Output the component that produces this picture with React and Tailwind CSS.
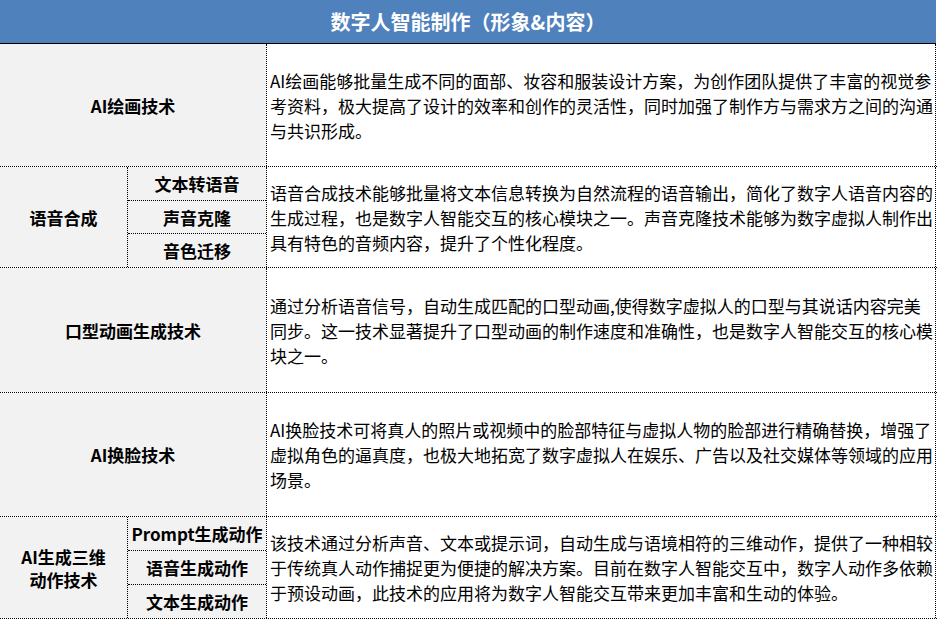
import React from "react";

const font = { fontFamily: '"Noto Sans CJK SC", "Noto Sans", sans-serif' };

const rows = [
  {
    label: ["AI绘画技术"],
    h: "h-[123px]",
    lines: [
      "AI绘画能够批量生成不同的面部、妆容和服装设计方案，为创作团队提供了丰富的视觉参",
      "考资料，极大提高了设计的效率和创作的灵活性，同时加强了制作方与需求方之间的沟通",
      "与共识形成。",
    ],
  },
  {
    label: ["语音合成"],
    subs: ["文本转语音", "声音克隆", "音色迁移"],
    h: "h-[101px]",
    lines: [
      "语音合成技术能够批量将文本信息转换为自然流程的语音输出，简化了数字人语音内容的",
      "生成过程，也是数字人智能交互的核心模块之一。声音克隆技术能够为数字虚拟人制作出",
      "具有特色的音频内容，提升了个性化程度。",
    ],
  },
  {
    label: ["口型动画生成技术"],
    h: "h-[125px]",
    lines: [
      "通过分析语音信号，自动生成匹配的口型动画,使得数字虚拟人的口型与其说话内容完美",
      "同步。这一技术显著提升了口型动画的制作速度和准确性，也是数字人智能交互的核心模",
      "块之一。",
    ],
  },
  {
    label: ["AI换脸技术"],
    h: "h-[124px]",
    lines: [
      "AI换脸技术可将真人的照片或视频中的脸部特征与虚拟人物的脸部进行精确替换，增强了",
      "虚拟角色的逼真度，也极大地拓宽了数字虚拟人在娱乐、广告以及社交媒体等领域的应用",
      "场景。",
    ],
  },
  {
    label: ["AI生成三维", "动作技术"],
    subs: ["Prompt生成动作", "语音生成动作", "文本生成动作"],
    h: "h-[102px]",
    lines: [
      "该技术通过分析声音、文本或提示词，自动生成与语境相符的三维动作，提供了一种相较",
      "于传统真人动作捕捉更为便捷的解决方案。目前在数字人智能交互中，数字人动作多依赖",
      "于预设动画，此技术的应用将为数字人智能交互带来更加丰富和生动的体验。",
    ],
  },
];

const Label = ({ lines }) => (
  <div className="flex flex-col items-center text-[17px] leading-[23px] font-bold text-black whitespace-nowrap">
    {lines.map((l) => (
      <span key={l}>{l}</span>
    ))}
  </div>
);

const Row = ({ row }) => (
  <div className={`flex ${row.h} border-b border-dotted border-black`}>
    {row.subs ? (
      <div className="w-[266px] flex bg-[#f2f2f2]">
        <div className="w-[127px] flex items-center justify-center">
          <Label lines={row.label} />
        </div>
        <div className="flex-1 flex flex-col border-l border-dotted border-black">
          {row.subs.map((s, i) => (
            <div
              key={s}
              className={`flex-1 flex items-center justify-center ${
                i < row.subs.length - 1 ? "border-b border-dotted border-black" : ""
              }`}
            >
              <Label lines={[s]} />
            </div>
          ))}
        </div>
      </div>
    ) : (
      <div className="w-[266px] flex items-center justify-center bg-[#f2f2f2]">
        <Label lines={row.label} />
      </div>
    )}
    <div className="w-[670px] flex flex-col justify-center pl-[3px] bg-white border-l border-r border-dotted border-black overflow-hidden">
      {row.lines.map((l) => (
        <div key={l} className="text-[17px] leading-[25px] text-black whitespace-nowrap">
          {l}
        </div>
      ))}
    </div>
  </div>
);

export default function App() {
  return (
    <div className="w-[937px] h-[621px] bg-white" style={font}>
      <div className="w-[936px] h-[44px] flex items-center justify-center bg-[#4f81bd] border-b border-black">
        <span className="text-white text-[20px] font-bold">
          数字人智能制作（形象&内容）
        </span>
      </div>
      {rows.map((r, i) => (
        <Row key={i} row={r} />
      ))}
    </div>
  );
}
